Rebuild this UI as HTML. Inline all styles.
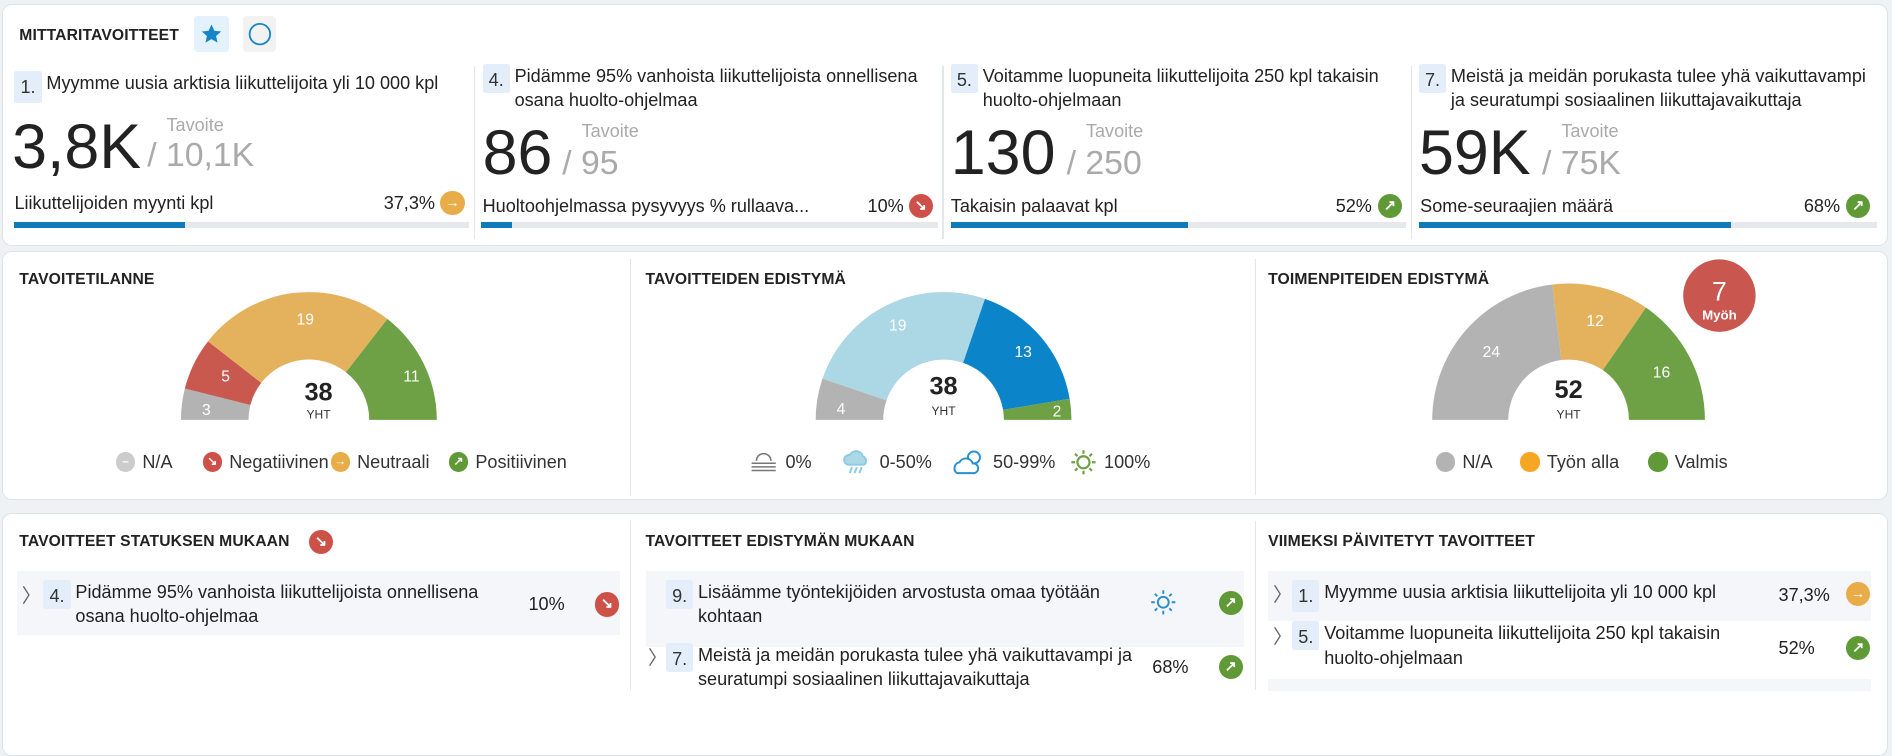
<!DOCTYPE html>
<html><head><meta charset="utf-8"><style>
html{zoom:1.2066}
body{margin:0;width:1568px;height:568px;overflow:hidden;background:#eef2f5;font-family:"Liberation Sans",sans-serif;color:#222;position:relative}
.a{position:absolute}
.panel{position:absolute;background:#fff;border:1px solid #dde3e8;border-radius:8px}
.h{position:absolute;font-size:13px;font-weight:bold;letter-spacing:.1px;color:#222}
.num{display:inline-block;background:#e3eefa;color:#333;padding:3px 5px;border-radius:2px;font-size:15px;margin-right:4px;vertical-align:top}
.t{font-size:15px;line-height:20px}
.big{font-size:52px;line-height:52px}
.tav{font-size:15px;color:#aaa}
.goal{font-size:28px;color:#aaa}
.ic{position:absolute;width:20px;height:20px;border-radius:50%;color:#fff;font-size:12px;text-align:center;line-height:20px;font-weight:bold}
.y{background:#e8ad48}.r{background:#cd5148}.g{background:#5f9a37}
.bar{position:absolute;height:5px;background:#e6e8eb}
.bar i{display:block;height:5px;background:#0f7ab8}
.vd{position:absolute;width:1px;background:#e4e7ea}
.leg{position:absolute;font-size:15px;color:#333;display:flex;align-items:center;height:20px;top:373px}
.dot{display:inline-block;width:16px;height:16px;border-radius:50%;margin-right:6px;color:#fff;font-size:10px;text-align:center;line-height:16px;font-weight:bold}
.row{position:absolute;background:#f5f6fa}
.chev{position:absolute;color:#666;font-size:16px}
.leg svg{margin-right:5px}
</style></head><body>

<div class="panel" style="left:2px;top:3px;width:1561px;height:199px"></div>
<div class="h" style="left:16px;top:22px">MITTARITAVOITTEET</div>
<div class="a" style="left:161px;top:13px;width:29px;height:30px;background:#e3f2fd;border-radius:3px"><svg width="29" height="30"><path d="M14.5 7l2.4 5.2 5.6.6-4.2 3.8 1.2 5.5-5-2.9-5 2.9 1.2-5.5-4.2-3.8 5.6-.6z" fill="#1685c9"/></svg></div>
<div class="a" style="left:201px;top:13px;width:28px;height:30px;background:#f2f2f2;border-radius:3px"><svg width="28" height="30"><circle cx="14" cy="15" r="8.5" fill="none" stroke="#1685c9" stroke-width="1.5"/></svg></div>

<div class="vd" style="left:393px;top:55px;height:143px"></div>
<div class="vd" style="left:781px;top:55px;height:143px"></div>
<div class="vd" style="left:1169px;top:55px;height:143px"></div>

<div class="a t" style="left:12px;top:59px;width:370px"><span class="num">1.</span>Myymme uusia arktisia liikuttelijoita yli 10 000 kpl</div>
<div class="a big" style="left:10px;top:96px">3,8K</div>
<div class="a tav" style="left:138px;top:95px">Tavoite</div>
<div class="a goal" style="left:122px;top:113px">/ 10,1K</div>
<div class="a t" style="left:12px;top:158px">Liikuttelijoiden myynti kpl</div>
<div class="a t" style="left:318px;top:158px">37,3%</div>
<div class="ic y" style="left:365px;top:158px">→</div>
<div class="bar" style="left:12px;top:184px;width:377px"><i style="width:141px"></i></div>

<div class="a t" style="left:400px;top:53px;width:370px;display:flex"><span class="num" style="height:18px">4.</span><span>Pidämme 95% vanhoista liikuttelijoista onnellisena osana huolto-ohjelmaa</span></div>
<div class="a big" style="left:400px;top:101px">86</div>
<div class="a tav" style="left:482px;top:100px">Tavoite</div>
<div class="a goal" style="left:466px;top:119px">/ 95</div>
<div class="a t" style="left:400px;top:161px">Huoltoohjelmassa pysyvyys % rullaava...</div>
<div class="a t" style="left:719px;top:161px">10%</div>
<div class="ic r" style="left:753px;top:161px">↘</div>
<div class="bar" style="left:399px;top:184px;width:378px"><i style="width:25px"></i></div>

<div class="a t" style="left:788px;top:53px;width:370px;display:flex"><span class="num" style="height:18px">5.</span><span>Voitamme luopuneita liikuttelijoita 250 kpl takaisin huolto-ohjelmaan</span></div>
<div class="a big" style="left:788px;top:101px">130</div>
<div class="a tav" style="left:900px;top:100px">Tavoite</div>
<div class="a goal" style="left:884px;top:119px">/ 250</div>
<div class="a t" style="left:788px;top:161px">Takaisin palaavat kpl</div>
<div class="a t" style="left:1107px;top:161px">52%</div>
<div class="ic g" style="left:1142px;top:161px">↗</div>
<div class="bar" style="left:788px;top:184px;width:377px"><i style="width:197px"></i></div>

<div class="a t" style="left:1176px;top:53px;width:380px;display:flex"><span class="num" style="height:18px">7.</span><span>Meistä ja meidän porukasta tulee yhä vaikuttavampi ja seuratumpi sosiaalinen liikuttajavaikuttaja</span></div>
<div class="a big" style="left:1176px;top:101px">59K</div>
<div class="a tav" style="left:1294px;top:100px">Tavoite</div>
<div class="a goal" style="left:1278px;top:119px">/ 75K</div>
<div class="a t" style="left:1177px;top:161px">Some-seuraajien määrä</div>
<div class="a t" style="left:1495px;top:161px">68%</div>
<div class="ic g" style="left:1530px;top:161px">↗</div>
<div class="bar" style="left:1176px;top:184px;width:380px"><i style="width:259px"></i></div>

<div class="panel" style="left:2px;top:208px;width:1561px;height:205px"></div>
<div class="vd" style="left:522px;top:215px;height:195px"></div>
<div class="vd" style="left:1040px;top:215px;height:195px"></div>
<div class="h" style="left:16px;top:225px">TAVOITETILANNE</div>
<div class="h" style="left:535px;top:225px">TAVOITTEIDEN EDISTYMÄ</div>
<div class="h" style="left:1051px;top:225px">TOIMENPITEIDEN EDISTYMÄ</div>

<svg class="a" style="left:0;top:0" width="1568" height="420" font-family="Liberation Sans" font-size="13" fill="#fff" text-anchor="middle">
<g transform="translate(256,348)">
<path d="M-106 0A106 106 0 0 1 -102.8 -26L-48.5 -12.3A50 50 0 0 0 -50 0Z" fill="#b3b3b3"/>
<path d="M-102.8 -26A106 106 0 0 1 -83.6 -65.1L-39.5 -30.7A50 50 0 0 0 -48.5 -12.3Z" fill="#c9584f"/>
<path d="M-83.6 -65.1A106 106 0 0 1 65.1 -83.6L30.7 -39.5A50 50 0 0 0 -39.5 -30.7Z" fill="#e4b15c"/>
<path d="M65.1 -83.6A106 106 0 0 1 106 0L50 0A50 50 0 0 0 30.7 -39.5Z" fill="#6ea046"/>
<text x="-85" y="-4">3</text><text x="-69" y="-32">5</text><text x="-3" y="-79">19</text><text x="85" y="-32">11</text>
<text x="8" y="-16" fill="#222" font-size="21" font-weight="bold">38</text><text x="8" y="-1" fill="#333" font-size="10">YHT</text>
</g>
<g transform="translate(782,348)">
<path d="M-106 0A106 106 0 0 1 -100.3 -34.3L-47.3 -16.2A50 50 0 0 0 -50 0Z" fill="#b3b3b3"/>
<path d="M-100.3 -34.3A106 106 0 0 1 34.3 -100.3L16.2 -47.3A50 50 0 0 0 -47.3 -16.2Z" fill="#acd8e6"/>
<path d="M34.3 -100.3A106 106 0 0 1 104.5 -17.5L49.3 -8.3A50 50 0 0 0 16.2 -47.3Z" fill="#0b84c9"/>
<path d="M104.5 -17.5A106 106 0 0 1 106 0L50 0A50 50 0 0 0 49.3 -8.3Z" fill="#6ea046"/>
<text x="-85" y="-5">4</text><text x="-38" y="-74">19</text><text x="66" y="-52">13</text><text x="94" y="-3">2</text>
<text x="0" y="-21" fill="#222" font-size="21" font-weight="bold">38</text><text x="0" y="-4" fill="#333" font-size="10">YHT</text>
</g>
<g transform="translate(1300,348)">
<path d="M-113 0A113 113 0 0 1 -13.5 -112.2L-6 -49.6A50 50 0 0 0 -50 0Z" fill="#b3b3b3"/>
<path d="M-13.5 -112.2A113 113 0 0 1 64.2 -93L28.4 -41.2A50 50 0 0 0 -6 -49.6Z" fill="#e4b15c"/>
<path d="M64.2 -93A113 113 0 0 1 113 0L50 0A50 50 0 0 0 28.4 -41.2Z" fill="#6ea046"/>
<text x="-64" y="-52">24</text><text x="22" y="-78">12</text><text x="77" y="-35">16</text>
<text x="0" y="-18" fill="#222" font-size="21" font-weight="bold">52</text><text x="0" y="-1" fill="#333" font-size="10">YHT</text>
</g>
<circle cx="1425" cy="245" r="30" fill="#c9574f"/>
<text x="1425" y="249" font-size="22">7</text><text x="1425" y="265" font-size="11" font-weight="bold">Myöh</text>
</svg>

<div class="leg" style="left:96px"><span class="dot" style="background:#ccc">–</span>N/A</div>
<div class="leg" style="left:168px"><span class="dot" style="background:#cd5148">↘</span>Negatiivinen</div>
<div class="leg" style="left:274px"><span class="dot" style="background:#e8ad48">→</span>Neutraali</div>
<div class="leg" style="left:372px"><span class="dot" style="background:#5f9a37">↗</span>Positiivinen</div>

<div class="leg" style="left:620px"><svg width="26" height="20" fill="none" stroke="#777" stroke-width="1.3"><path d="M7 9a6 6 0 0 1 12 0M3 11h20M3 14h20M3 17h20"/></svg>0%</div>
<div class="leg" style="left:696px"><svg width="28" height="22" fill="none" stroke="#8ccbe6" stroke-width="1.6"><path d="M7 13a4 4 0 0 1 1-8a6 6 0 0 1 11 1a4 4 0 0 1 1 7z" fill="#acd8e6"/><path d="M10 15l-2 5M14 15l-2 5M18 15l-2 5"/></svg>0-50%</div>
<div class="leg" style="left:788px"><svg width="30" height="22" fill="none" stroke="#2a8fd0" stroke-width="1.6"><circle cx="19" cy="7" r="5"/><path d="M5 20a5 5 0 0 1 2-9a6 6 0 0 1 11 1a4 4 0 0 1 1 8z" fill="#fff"/></svg>50-99%</div>
<div class="leg" style="left:886px"><svg width="24" height="22" fill="none" stroke="#6ea046" stroke-width="1.8"><circle cx="12" cy="11" r="5"/><path d="M12 1v3M12 18v3M2 11h3M19 11h3M5 4l2 2M17 16l2 2M19 4l-2 2M7 16l-2 2"/></svg>100%</div>

<div class="leg" style="left:1190px"><span class="dot" style="background:#b3b3b3"></span>N/A</div>
<div class="leg" style="left:1260px"><span class="dot" style="background:#f5a623"></span>Työn alla</div>
<div class="leg" style="left:1366px"><span class="dot" style="background:#5f9a37"></span>Valmis</div>

<div class="panel" style="left:2px;top:425px;width:1561px;height:200px"></div>
<div class="vd" style="left:522px;top:432px;height:140px"></div>
<div class="vd" style="left:1040px;top:432px;height:140px"></div>
<div class="h" style="left:16px;top:442px">TAVOITTEET STATUKSEN MUKAAN</div>
<div class="ic r" style="left:256px;top:439px">↘</div>
<div class="h" style="left:535px;top:442px">TAVOITTEET EDISTYMÄN MUKAAN</div>
<div class="h" style="left:1051px;top:442px">VIIMEKSI PÄIVITETYT TAVOITTEET</div>

<div class="row" style="left:14px;top:473px;width:500px;height:53px"></div>
<div class="chev" style="left:18px;top:481px">〉</div>
<div class="a t" style="left:36px;top:481px;width:370px;display:flex"><span class="num" style="height:18px">4.</span><span>Pidämme 95% vanhoista liikuttelijoista onnellisena osana huolto-ohjelmaa</span></div>
<div class="a t" style="left:438px;top:491px">10%</div>
<div class="ic r" style="left:493px;top:491px">↘</div>

<div class="row" style="left:535px;top:473px;width:496px;height:63px"></div>
<div class="a t" style="left:552px;top:481px;width:380px;display:flex"><span class="num" style="height:18px">9.</span><span>Lisäämme työntekijöiden arvostusta omaa työtään kohtaan</span></div>
<svg class="a" style="left:953px;top:488px" width="22" height="22" fill="none" stroke="#2a8fd0" stroke-width="1.6"><circle cx="11" cy="11" r="4.5"/><path d="M11 1v3M11 18v3M1 11h3M18 11h3M4 4l2 2M16 16l2 2M18 4l-2 2M6 16l-2 2"/></svg>
<div class="ic g" style="left:1010px;top:490px">↗</div>
<div class="chev" style="left:537px;top:532px">〉</div>
<div class="a t" style="left:552px;top:533px;width:390px;display:flex"><span class="num" style="height:18px">7.</span><span>Meistä ja meidän porukasta tulee yhä vaikuttavampi ja seuratumpi sosiaalinen liikuttajavaikuttaja</span></div>
<div class="a t" style="left:955px;top:543px">68%</div>
<div class="ic g" style="left:1010px;top:543px">↗</div>

<div class="row" style="left:1051px;top:473px;width:500px;height:42px"></div>
<div class="chev" style="left:1055px;top:480px">〉</div>
<div class="a t" style="left:1071px;top:481px"><span class="num">1.</span>Myymme uusia arktisia liikuttelijoita yli 10 000 kpl</div>
<div class="a t" style="left:1474px;top:483px">37,3%</div>
<div class="ic y" style="left:1530px;top:482px">→</div>
<div class="chev" style="left:1055px;top:515px">〉</div>
<div class="a t" style="left:1071px;top:515px;width:380px;display:flex"><span class="num" style="height:18px">5.</span><span>Voitamme luopuneita liikuttelijoita 250 kpl takaisin huolto-ohjelmaan</span></div>
<div class="a t" style="left:1474px;top:527px">52%</div>
<div class="ic g" style="left:1530px;top:527px">↗</div>
<div class="row" style="left:1051px;top:563px;width:500px;height:10px"></div>
</body></html>
